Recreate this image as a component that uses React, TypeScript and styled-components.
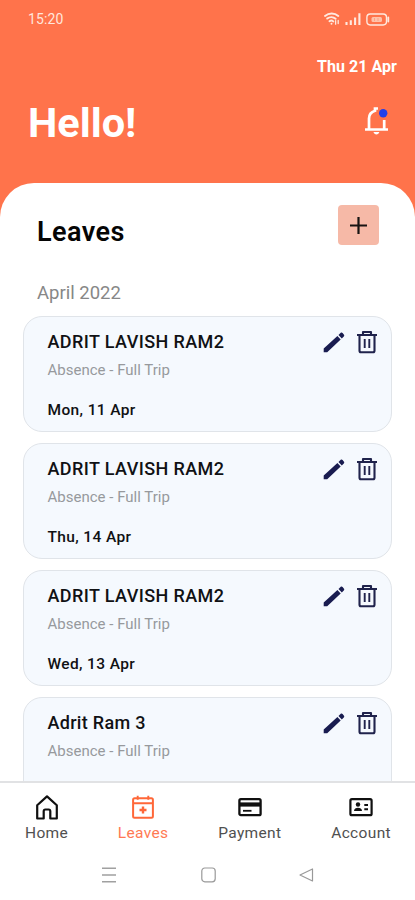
import React from "react";
import styled, { createGlobalStyle } from "styled-components";

const GlobalStyle = createGlobalStyle`
  * { box-sizing: border-box; }
  body { margin: 0; background: #fff; font-family: Roboto, "Liberation Sans", sans-serif; }
  svg { display: block; flex: none; }
  h1, h2, h3, p { margin: 0; }
  button { border: 0; padding: 0; background: none; font: inherit; color: inherit; }
`;

const Screen = styled.main`
  width: 415px;
  height: 900px;
  display: flex;
  flex-direction: column;
  overflow: hidden;
  background: #ff734b;
`;

const Header = styled.header`
  height: 183px;
  flex: none;
  color: #fff;
`;

const StatusBar = styled.div`
  display: flex;
  justify-content: space-between;
  height: 38px;
  padding: 11px 25px 0 28px;
  color: #ffe6dc;
  font-size: 14px;
  line-height: 17px;
  letter-spacing: 0.1px;
`;

const StatusIcons = styled.div`
  display: flex;
  height: 16px;
  align-items: center;
  gap: 5px;
`;

const Today = styled.p`
  padding: 19px 18px 0 0;
  text-align: right;
  font-size: 16px;
  line-height: 19px;
  font-weight: 700;
  letter-spacing: 0.05px;
`;

const Greeting = styled.div`
  display: flex;
  justify-content: space-between;
  padding: 22px 26px 0 28px;
`;

const Hello = styled.h1`
  font-size: 41.5px;
  line-height: 50px;
  font-weight: 700;
`;

const BellButton = styled.button`
  margin-top: 5px;
  height: 34px;
`;

const Sheet = styled.section`
  flex: 1;
  min-height: 0;
  overflow: hidden;
  background: #fff;
  border-radius: 34px 34px 0 0;
`;

const SheetHead = styled.div`
  display: flex;
  justify-content: space-between;
  padding: 22px 36px 0 37px;
`;

const Title = styled.h2`
  margin-top: 10px;
  font-size: 27px;
  line-height: 34px;
  font-weight: 600;
  letter-spacing: 0.45px;
  color: #050505;
`;

const AddButton = styled.button`
  display: grid;
  place-items: center;
  width: 41px;
  height: 40px;
  border-radius: 4px;
  background: #f6b9a7;
`;

const Month = styled.p`
  padding: 32px 0 0 37px;
  font-size: 18.5px;
  line-height: 24px;
  color: #878787;
`;

const List = styled.div`
  display: flex;
  flex-direction: column;
  gap: 11px;
  padding: 11px 23px 0;
`;

const Card = styled.article`
  display: flex;
  justify-content: space-between;
  align-items: flex-start;
  height: 116px;
  flex: none;
  padding: 12px 13.5px 0 23.5px;
  border: 1px solid #e0e4e9;
  border-radius: 19px;
  background: #f5f9fe;
`;

const Name = styled.h3<{ $spacing: number }>`
  font-size: 18px;
  line-height: 26px;
  font-weight: 500;
  letter-spacing: ${(p) => p.$spacing}px;
  color: #101114;
`;

const Kind = styled.p`
  margin-top: 5px;
  font-size: 15px;
  line-height: 20px;
  letter-spacing: 0.01px;
  color: #97999d;
`;

const Day = styled.p`
  margin-top: 20px;
  font-size: 15.5px;
  line-height: 20px;
  font-weight: 500;
  letter-spacing: 0.37px;
  color: #101114;
`;

const Actions = styled.div`
  display: flex;
  gap: 11px;
  padding-top: 1px;
`;

const Nav = styled.nav`
  height: 73px;
  flex: none;
  display: flex;
  justify-content: space-between;
  padding: 12px 24px 0 25px;
  border-top: 2px solid #e1e2e4;
  background: #fff;
`;

const NavItem = styled.button<{ $active?: boolean }>`
  display: flex;
  flex-direction: column;
  align-items: center;
  height: 48px;
  gap: 4px;
  color: ${(p) => (p.$active ? "#ff6738" : "#101010")};
`;

const NavLabel = styled.span<{ $active?: boolean }>`
  font-size: 15.5px;
  line-height: 18px;
  letter-spacing: 0.35px;
  color: ${(p) => (p.$active ? "#ff7953" : "#505050")};
`;

const SystemBar = styled.div`
  display: flex;
  justify-content: space-between;
  height: 46px;
  flex: none;
  padding: 13px 101px 0 101px;
  background: #fff;
`;

const Wifi = () => (
  <svg width="16" height="14" viewBox="0 0 16 14" fill="none" stroke="#ffe9df" strokeWidth="1.9" strokeLinecap="round">
    <path d="M1 3.9C5 .7 10.5.7 14.3 4M3.2 6.6c2.5-2 6-2 8.4.2M5.5 9.3c1.2-.9 2.6-.9 3.8.1" />
    <path d="M7.5 11.6v.1" />
    <path d="M11.6 8.6v3.6M14.2 8.4v3.2" strokeWidth="1.3" />
  </svg>
);

const Signal = () => (
  <svg width="16" height="14" viewBox="0 0 16 14" stroke="#ffe9df" strokeWidth="2.1">
    <path d="M1.5 13v-3M5.8 13V8.2M10.1 13V5.5M14.4 13V1.2" />
  </svg>
);

const Battery = () => (
  <svg width="24" height="13" viewBox="0 0 24 13" fill="none" stroke="#ffe9df">
    <rect x=".9" y="1" width="19.6" height="11" rx="3.4" strokeWidth="1.4" />
    <path d="M22.3 4.5v4" strokeWidth="1.8" strokeLinecap="round" />
    <rect x="5.5" y="4" width="10.5" height="5" rx="1.5" fill="#ffc2aa" stroke="none" />
    <path d="M8.5 5v3M12 5v3" stroke="#ff9878" strokeWidth=".8" />
  </svg>
);

const Bell = () => (
  <svg width="25" height="34" viewBox="0 0 25 34" fill="none">
    <path d="M1 26.5h23M5 26V15.5c0-4 2.5-6.7 6-7.8V5.5h3M20.2 26V17" stroke="#fff" strokeWidth="2.7" />
    <path d="M9.5 29h5.8c-.5 3.2-5.3 3.2-5.8 0z" fill="#fff" />
    <circle cx="19.2" cy="10.3" r="4.2" fill="#213fea" />
  </svg>
);

const Plus = () => (
  <svg width="19" height="19" viewBox="0 0 19 19" stroke="#171312" strokeWidth="2.2">
    <path d="M9.5 1v17M1 9.5h17" />
  </svg>
);

const Pencil = () => (
  <svg width="22" height="24" viewBox="0 0 22 24" fill="#191c50">
    <path d="M.7 18.6 14.4 6l3.3 3.6L4.2 22.2H.7zM15.5 5l2-1.9c.7-.7 1.5-.6 2.1 0l1.2 1.3c.6.7.6 1.4 0 2l-2 2z" />
  </svg>
);

const Trash = () => (
  <svg width="22" height="24" viewBox="0 0 22 24" fill="none" stroke="#20234c">
    <path d="M1 5h20M7 4.5V2h8v2.5M3.5 5v15.8c0 1 .5 1.5 1.5 1.5h12c1 0 1.5-.5 1.5-1.5V5" strokeWidth="2.1" strokeLinejoin="round" />
    <path d="M8.7 9v9M13.3 9v9" strokeWidth="1.9" />
  </svg>
);

const Home = () => (
  <svg width="22" height="25" viewBox="0 0 22 25" fill="none" stroke="currentColor" strokeWidth="2.2" strokeLinejoin="round">
    <path d="M1.2 23.5V10.2L11 1.4l9.8 8.8v13.3h-6.5v-7.2c0-1.2-.6-1.8-1.7-1.8H9.4c-1.1 0-1.7.6-1.7 1.8v7.2z" />
  </svg>
);

const CalendarPlus = () => (
  <svg width="22" height="25" viewBox="0 0 22 25" fill="none" stroke="currentColor">
    <rect x="1.1" y="3.2" width="19.8" height="19.6" rx="1.5" strokeWidth="2" />
    <path d="M1 8.2h20M5.7.7v4M16.3.7v4" strokeWidth="1.9" />
    <path d="M11 11.5v7M7.5 15h7" strokeWidth="2.4" />
  </svg>
);

const CreditCard = () => (
  <svg width="24" height="25" viewBox="0 0 24 25" fill="none" stroke="currentColor">
    <rect x="1.4" y="4.2" width="21.2" height="16" rx="1.5" strokeWidth="2.3" />
    <path d="M1 9.5h22" strokeWidth="4.2" />
    <path d="M5 15.8h8.5" strokeWidth="1.8" />
  </svg>
);

const IdCard = () => (
  <svg width="24" height="25" viewBox="0 0 24 25" fill="none" stroke="currentColor">
    <rect x="1.4" y="4.2" width="21.2" height="16" rx="1.5" strokeWidth="2.2" />
    <circle cx="9" cy="9.5" r="2.2" fill="currentColor" stroke="none" />
    <path d="M5 16c0-4.3 8-4.3 8 0z" fill="currentColor" stroke="none" />
    <path d="M15.3 10h3.7M15.3 14.3h3.7" strokeWidth="2" />
  </svg>
);

const RecentsKey = () => (
  <svg width="16" height="16" viewBox="0 0 16 16" stroke="#a0a0a0" strokeWidth="1.4">
    <path d="M1 1.3h14M1 8h14M1 14.7h14" />
  </svg>
);

const HomeKey = () => (
  <svg width="15" height="16" viewBox="0 0 15 16" fill="none" stroke="#999" strokeWidth="1.2">
    <rect x=".8" y="1" width="13.4" height="13.8" rx="3" />
  </svg>
);

const BackKey = () => (
  <svg width="15" height="16" viewBox="0 0 15 16" fill="none" stroke="#999" strokeWidth="1.2" strokeLinejoin="round">
    <path d="M13.5 2v12L1 8z" />
  </svg>
);

const leaves = [
  { name: "ADRIT LAVISH RAM2", day: "Mon, 11 Apr", spacing: 0.4 },
  { name: "ADRIT LAVISH RAM2", day: "Thu, 14 Apr", spacing: 0.4 },
  { name: "ADRIT LAVISH RAM2", day: "Wed, 13 Apr", spacing: 0.4 },
  { name: "Adrit Ram 3", day: "", spacing: 0.3 },
];

const tabs = [
  { label: "Home", Icon: Home },
  { label: "Leaves", Icon: CalendarPlus, active: true },
  { label: "Payment", Icon: CreditCard },
  { label: "Account", Icon: IdCard },
];

export default function App() {
  return (
    <Screen>
      <GlobalStyle />
      <Header>
        <StatusBar>
          <span>15:20</span>
          <StatusIcons><Wifi /><Signal /><Battery /></StatusIcons>
        </StatusBar>
        <Today>Thu 21 Apr</Today>
        <Greeting>
          <Hello>Hello!</Hello>
          <BellButton aria-label="Notifications"><Bell /></BellButton>
        </Greeting>
      </Header>
      <Sheet>
        <SheetHead>
          <Title>Leaves</Title>
          <AddButton aria-label="Add leave"><Plus /></AddButton>
        </SheetHead>
        <Month>April 2022</Month>
        <List>
          {leaves.map((leave, i) => (
            <Card key={i}>
              <div>
                <Name $spacing={leave.spacing}>{leave.name}</Name>
                <Kind>Absence - Full Trip</Kind>
                <Day>{leave.day}</Day>
              </div>
              <Actions>
                <button aria-label="Edit"><Pencil /></button>
                <button aria-label="Delete"><Trash /></button>
              </Actions>
            </Card>
          ))}
        </List>
      </Sheet>
      <Nav>
        {tabs.map(({ label, Icon, active }) => (
          <NavItem key={label} $active={active}>
            <Icon />
            <NavLabel $active={active}>{label}</NavLabel>
          </NavItem>
        ))}
      </Nav>
      <SystemBar><RecentsKey /><HomeKey /><BackKey /></SystemBar>
    </Screen>
  );
}
